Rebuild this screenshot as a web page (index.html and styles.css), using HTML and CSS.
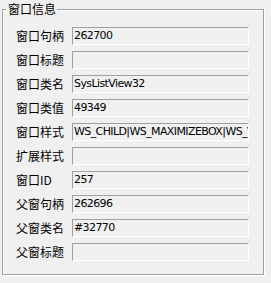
FILE: index.html
```html
<!DOCTYPE html>
<html>
<head>
<meta charset="utf-8">
<link rel="stylesheet" href="styles.css">
</head>
<body>
<div class="group">
  <div class="group-title">窗口信息</div>
  <div class="rows">
    <div class="label">窗口句柄</div><div class="field">262700</div>
    <div class="label">窗口标题</div><div class="field"></div>
    <div class="label">窗口类名</div><div class="field">SysListView32</div>
    <div class="label">窗口类值</div><div class="field">49349</div>
    <div class="label">窗口样式</div><div class="field">WS_CHILD|WS_MAXIMIZEBOX|WS_VISIBLE</div>
    <div class="label">扩展样式</div><div class="field"></div>
    <div class="label">窗口ID</div><div class="field">257</div>
    <div class="label">父窗句柄</div><div class="field">262696</div>
    <div class="label">父窗类名</div><div class="field">#32770</div>
    <div class="label">父窗标题</div><div class="field"></div>
  </div>
</div>
</body>
</html>
```

FILE: styles.css
```css
html, body {
  margin: 0;
  padding: 0;
  background: #f0f0f0;
}
body {
  width: 271px;
  height: 283px;
  overflow: hidden;
  font-family: "Noto Sans CJK SC", sans-serif;
  color: #000;
}
.group {
  position: relative;
  box-sizing: border-box;
  margin: 9px 0 0 2px;
  width: 262px;
  height: 266px;
  border: 1px solid #a0a0a0;
  box-shadow: inset 1px 1px 0 #fff, 1px 1px 0 #fff;
  padding: 17px 14px 0 13px;
}
.group-title {
  position: absolute;
  left: 3px;
  top: -10px;
  height: 18px;
  line-height: 18px;
  padding: 0 1px 0 2px;
  background: #f0f0f0;
  font-size: 12px;
}
.rows {
  display: grid;
  grid-template-columns: 56px 177px;
  grid-auto-rows: 18px;
  row-gap: 6px;
  align-items: center;
}
.label {
  font-size: 12px;
  line-height: 18px;
  white-space: nowrap;
}
.field {
  box-sizing: border-box;
  height: 18px;
  border-top: 1px solid #a0a0a0;
  border-left: 1px solid #a0a0a0;
  border-bottom: 1px solid #fff;
  border-right: 1px solid #fff;
  padding: 0 0 0 1px;
  font-family: "DejaVu Sans", sans-serif;
  font-size: 11px;
  letter-spacing: -0.6px;
  line-height: 16px;
  white-space: nowrap;
  overflow: hidden;
}
```
